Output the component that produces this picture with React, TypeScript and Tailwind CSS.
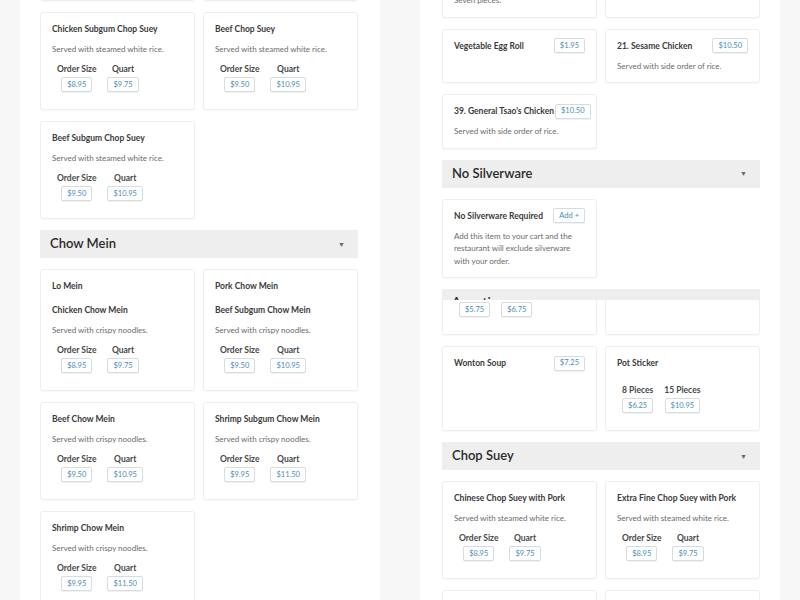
import React from "react";

type Opt = { label: string; price: string };

const Price: React.FC<{ value: string }> = ({ value }) => (
  <span className="inline-flex h-[15px] shrink-0 items-center justify-center whitespace-nowrap rounded-[2px] border border-[#d3dee3] bg-white px-[5px] text-[7.5px] leading-none text-[#4a8db5] shadow-[0_1px_1px_rgba(0,0,0,0.06)]">
    {value}
  </span>
);

const Options: React.FC<{ options: Opt[]; className?: string }> = ({ options, className }) => (
  <div className={`ml-[5px] flex items-start gap-[11px] ${className ?? ""}`}>
    {options.map((o) => (
      <div key={o.label} className="flex flex-col items-center">
        <span className="whitespace-nowrap text-[8.5px] font-bold leading-[12px] text-[#474747]">
          {o.label}
        </span>
        <div className="mt-[2px] flex">
          <Price value={o.price} />
        </div>
      </div>
    ))}
  </div>
);

const OptionCard: React.FC<{ title: string; desc?: string; options: Opt[] }> = ({
  title,
  desc,
  options,
}) => (
  <div className="rounded-[3px] border border-[#eeeeee] bg-white px-[11px] pb-[17px] pt-[10px] shadow-[0_1px_2px_rgba(0,0,0,0.03)]">
    <div className="whitespace-nowrap text-[8.5px] font-bold leading-[12px] text-[#3a3a3a]">
      {title}
    </div>
    {desc ? (
      <>
        <div className="mt-[8px] text-[8px] leading-[12px] text-[#6b6b6b]">{desc}</div>
        <Options options={options} className="mt-[8px]" />
      </>
    ) : (
      <Options options={options} className="mt-[15px]" />
    )}
  </div>
);

const SideCard: React.FC<{ title: string; price?: string; desc?: string; add?: boolean }> = ({
  title,
  price,
  desc,
  add,
}) => (
  <div className="rounded-[3px] border border-[#eeeeee] bg-white px-[11px] pb-[10px] pt-[8px] shadow-[0_1px_2px_rgba(0,0,0,0.03)]">
    <div className="flex h-[16px] items-center justify-between gap-[1px]">
      <span className="whitespace-nowrap text-[8.5px] font-bold leading-[12px] text-[#3a3a3a]">
        {title}
      </span>
      {price && <Price value={price} />}
      {add && <Price value="Add +" />}
    </div>
    {desc && (
      <div className="mt-[6px] text-[8px] leading-[12.5px] text-[#6b6b6b]">{desc}</div>
    )}
  </div>
);

const Header: React.FC<{ title: string }> = ({ title }) => (
  <div className="flex h-[28px] shrink-0 items-center justify-between bg-[#eeeeee] pl-[10px] pr-[13px]">
    <span className="text-[13px] font-semibold text-[#2b2b2b]">{title}</span>
    <span className="text-[7px] text-[#6a6a6a]">▼</span>
  </div>
);

const Row: React.FC<{ children: React.ReactNode }> = ({ children }) => (
  <div className="grid shrink-0 grid-cols-2 gap-x-[8px]">{children}</div>
);

const Tile: React.FC<{ side: "left" | "right"; offset: string; children: React.ReactNode }> = ({
  side,
  offset,
  children,
}) => (
  <div className="h-[300px] w-[400px] overflow-hidden bg-[#f7f7f7]">
    <div
      className={`ml-[20px] flex h-full w-[360px] flex-col bg-white ${
        side === "left" ? "pl-[20px] pr-[22px]" : "pl-[22px] pr-[20px]"
      }`}
    >
      <div className={`flex shrink-0 flex-col gap-[11px] ${offset}`}>{children}</div>
    </div>
  </div>
);

const rice = "Served with steamed white rice.";
const noodles = "Served with crispy noodles.";
const sz = (a: string, b: string): Opt[] => [
  { label: "Order Size", price: a },
  { label: "Quart", price: b },
];

export default function App() {
  return (
    <div
      className="grid h-[600px] w-[800px] grid-cols-2 grid-rows-2 bg-[#f7f7f7]"
      style={{ fontFamily: "Lato, 'Open Sans', sans-serif" }}
    >
      <Tile side="left" offset="-mt-[97px]">
        <Row>
          <OptionCard title="Chicken Chop Suey" desc={rice} options={sz("$8.95", "$9.75")} />
          <OptionCard title="Pork Chop Suey" desc={rice} options={sz("$8.95", "$9.75")} />
        </Row>
        <Row>
          <OptionCard title="Chicken Subgum Chop Suey" desc={rice} options={sz("$8.95", "$9.75")} />
          <OptionCard title="Beef Chop Suey" desc={rice} options={sz("$9.50", "$10.95")} />
        </Row>
        <Row>
          <OptionCard title="Beef Subgum Chop Suey" desc={rice} options={sz("$9.50", "$10.95")} />
          <div />
        </Row>
        <Header title="Chow Mein" />
        <Row>
          <OptionCard title="Lo Mein" desc={noodles} options={sz("$8.95", "$9.75")} />
          <OptionCard title="Pork Chow Mein" desc={noodles} options={sz("$8.95", "$9.75")} />
        </Row>
      </Tile>

      <Tile side="right" offset="-mt-[37px]">
        <Row>
          <SideCard title="Fried Wonton" price="$4.50" desc="Seven pieces." />
          <SideCard title="Egg Roll" price="$1.95" />
        </Row>
        <Row>
          <SideCard title="Vegetable Egg Roll" price="$1.95" />
          <SideCard
            title="21. Sesame Chicken"
            price="$10.50"
            desc="Served with side order of rice."
          />
        </Row>
        <Row>
          <SideCard
            title="39. General Tsao's Chicken"
            price="$10.50"
            desc="Served with side order of rice."
          />
          <div />
        </Row>
        <Header title="No Silverware" />
        <Row>
          <SideCard
            title="No Silverware Required"
            add
            desc="Add this item to your cart and the restaurant will exclude silverware with your order."
          />
          <div />
        </Row>
        <Header title="Appetizers" />
      </Tile>

      <Tile side="left" offset="-mt-[7px]">
        <Row>
          <OptionCard title="Chicken Chow Mein" desc={noodles} options={sz("$8.95", "$9.75")} />
          <OptionCard title="Beef Subgum Chow Mein" desc={noodles} options={sz("$9.50", "$10.95")} />
        </Row>
        <Row>
          <OptionCard title="Beef Chow Mein" desc={noodles} options={sz("$9.50", "$10.95")} />
          <OptionCard title="Shrimp Subgum Chow Mein" desc={noodles} options={sz("$9.95", "$11.50")} />
        </Row>
        <Row>
          <OptionCard title="Shrimp Chow Mein" desc={noodles} options={sz("$9.95", "$11.50")} />
          <div />
        </Row>
      </Tile>

      <Tile side="right" offset="-mt-[63px]">
        <Row>
          <OptionCard
            title="Egg Drop Soup"
            desc="Served with crispy noodles."
            options={[
              { label: "Pint", price: "$5.75" },
              { label: "Quart", price: "$6.75" },
            ]}
          />
          <SideCard title="Spring Roll" price="$1.95" />
        </Row>
        <Row>
          <SideCard title="Wonton Soup" price="$7.25" />
          <OptionCard
            title="Pot Sticker"
            options={[
              { label: "8 Pieces", price: "$6.25" },
              { label: "15 Pieces", price: "$10.95" },
            ]}
          />
        </Row>
        <Header title="Chop Suey" />
        <Row>
          <OptionCard title="Chinese Chop Suey with Pork" desc={rice} options={sz("$8.95", "$9.75")} />
          <OptionCard title="Extra Fine Chop Suey with Pork" desc={rice} options={sz("$8.95", "$9.75")} />
        </Row>
        <Row>
          <OptionCard title="Chicken Chop Suey" desc={rice} options={sz("$8.95", "$9.75")} />
          <OptionCard title="Pork Chop Suey" desc={rice} options={sz("$8.95", "$9.75")} />
        </Row>
      </Tile>
    </div>
  );
}
